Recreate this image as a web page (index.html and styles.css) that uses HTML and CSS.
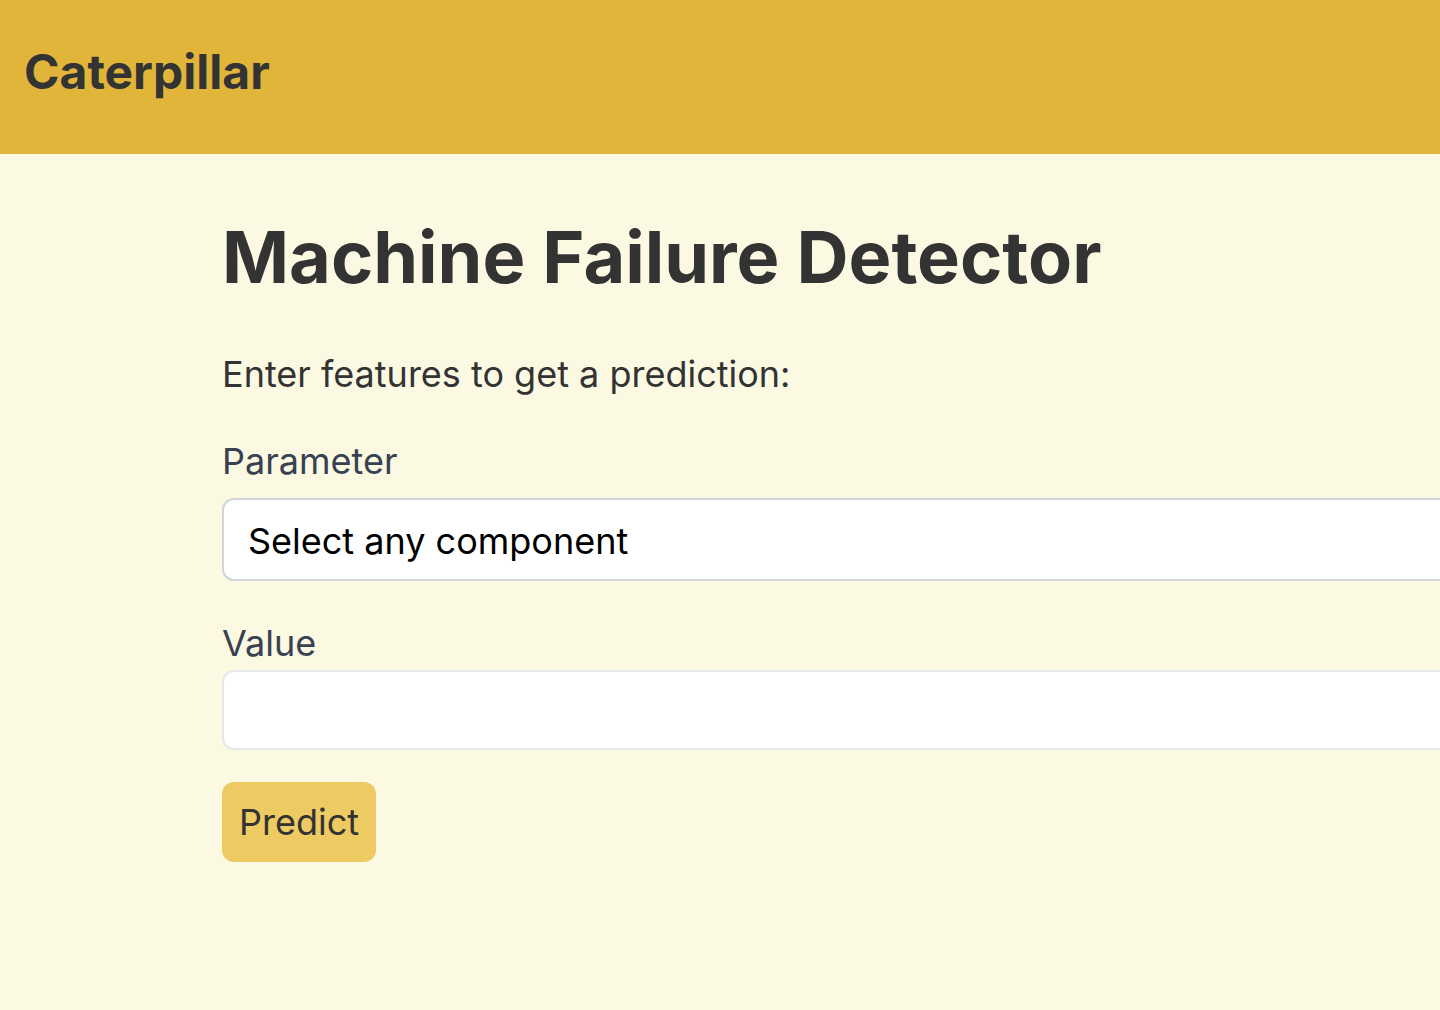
FILE: index.html
```html
<!DOCTYPE html>
<html lang="en">
<head>
<meta charset="utf-8">
<title>Machine Failure Detector</title>
<link rel="stylesheet" href="styles.css">
</head>
<body>
<header class="topbar">
  <div class="brand">Caterpillar</div>
</header>
<main class="content">
  <h1 class="title">Machine Failure Detector</h1>
  <p class="intro">Enter features to get a prediction:</p>
  <form class="form">
    <label class="label label-param" for="param">Parameter</label>
    <select class="field select" id="param">
      <option>Select any component</option>
    </select>
    <label class="label label-value" for="value">Value</label>
    <input class="field input" id="value" type="text">
    <button class="btn" type="button">Predict</button>
  </form>
</main>
</body>
</html>
```

FILE: styles.css
```css
html, body {
  margin: 0;
  padding: 0;
  overflow: hidden;
}
body {
  background: #fcf9e3;
  font-family: Inter, "Noto Sans", sans-serif;
  color: #333333;
  width: 1440px;
  height: 1010px;
}
.topbar {
  background: #e0b53a;
  box-sizing: border-box;
  height: 154px;
  padding: 40px 24px 0;
}
.brand {
  font-size: 48px;
  line-height: 64px;
  font-weight: 700;
  color: #333333;
}
.content {
  padding-left: 222px;
}
.title {
  margin: 63px 0 0;
  font-size: 72px;
  line-height: 80px;
  font-weight: 700;
  color: #333333;
}
.intro {
  margin: 53px 0 0;
  font-size: 36px;
  line-height: 48px;
  color: #333333;
}
.form {
  display: flex;
  flex-direction: column;
  align-items: flex-start;
  width: 1260px;
}
.label {
  font-size: 36px;
  line-height: 48px;
  color: #374151;
}
.label-param {
  margin-top: 39px;
}
.label-value {
  margin-top: 38px;
}
.field {
  box-sizing: border-box;
  width: 1260px;
  background: #ffffff;
  border-radius: 12px;
  font-family: Inter, "Noto Sans", sans-serif;
  outline: none;
  -webkit-appearance: none;
  appearance: none;
}
.select {
  margin-top: 13px;
  height: 83px;
  border: 2px solid #d1d5db;
  padding: 2px 24px 0;
  font-size: 36px;
  color: #000000;
}
.input {
  margin-top: 3px;
  height: 80px;
  border: 2px solid #e5e7eb;
  padding: 0 24px;
  font-size: 36px;
}
.btn {
  margin-top: 32px;
  height: 80px;
  width: 154px;
  border: none;
  border-radius: 12px;
  background: #eeca62;
  color: #333333;
  font-family: Inter, "Noto Sans", sans-serif;
  font-size: 36px;
  padding: 0;
}
```
